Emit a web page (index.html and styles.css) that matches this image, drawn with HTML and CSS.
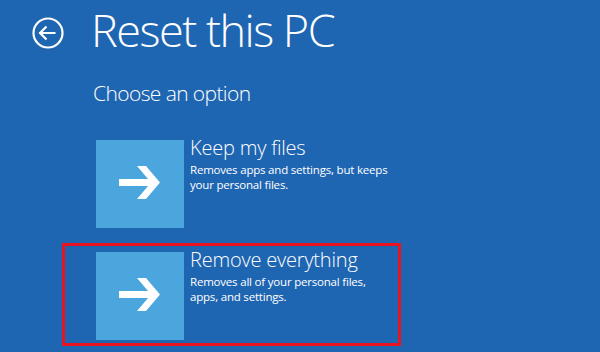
FILE: index.html
```html
<!DOCTYPE html>
<html lang="en">
<head>
    <meta charset="UTF-8">
    <meta name="viewport" content="width=device-width, initial-scale=1.0">
    <title>Reset this PC</title>
    <link rel="stylesheet" href="styles.css">
</head>
<body>
    <div class="screen">
        <div class="header">
            <button class="back-button" aria-label="Back">
                <svg width="34" height="34" viewBox="0 0 34 34">
                    <circle cx="17" cy="17" r="14.5" fill="none" stroke="#fff" stroke-width="2.2"/>
                    <path d="M9.5 17 H24.5 M15.5 10.5 L9 17 L15.5 23.5" fill="none" stroke="#fff" stroke-width="2.2"/>
                </svg>
            </button>
            <h1 class="title">Reset this PC</h1>
        </div>

        <h2 class="subtitle">Choose an option</h2>

        <div class="options">
            <div class="option">
                <div class="option-tile">
                    <svg width="88" height="88" viewBox="0 0 88 88">
                        <rect x="23" y="39" width="33" height="7" fill="#fff"/>
                        <polygon points="41,26 50,26 64,42.5 50,59 41,59 55,42.5" fill="#fff"/>
                    </svg>
                </div>
                <div class="option-text">
                    <div class="option-title">Keep my files</div>
                    <div class="option-desc">Removes apps and settings, but keeps<br>your personal files.</div>
                </div>
            </div>

            <div class="option selected">
                <div class="option-tile">
                    <svg width="88" height="88" viewBox="0 0 88 88">
                        <rect x="23" y="39" width="33" height="7" fill="#fff"/>
                        <polygon points="41,26 50,26 64,42.5 50,59 41,59 55,42.5" fill="#fff"/>
                    </svg>
                </div>
                <div class="option-text">
                    <div class="option-title">Remove everything</div>
                    <div class="option-desc">Removes all of your personal files,<br>apps, and settings.</div>
                </div>
            </div>
        </div>
    </div>
</body>
</html>
```

FILE: styles.css
```css
body {
    margin: 0;
    background-color: #1f66b2;
    font-family: "Open Sans", "Noto Sans", sans-serif;
    color: #fff;
    overflow: hidden;
}

.screen {
    width: 600px;
    height: 352px;
    box-sizing: border-box;
    padding-top: 7px;
}

.header {
    display: flex;
    align-items: flex-start;
}

.back-button {
    width: 34px;
    height: 34px;
    padding: 0;
    margin: 9px 0 0 31px;
    border: none;
    background: none;
    display: block;
}

.back-button svg {
    display: block;
}

.title {
    margin: 0 0 0 26px;
    font-size: 45px;
    font-weight: 300;
    line-height: 45px;
    letter-spacing: -1.5px;
}

.subtitle {
    margin: 31px 0 0 93px;
    font-size: 21px;
    font-weight: 300;
    line-height: 21px;
    letter-spacing: -0.6px;
}

.options {
    margin: 36px 0 0 96px;
    display: flex;
    flex-direction: column;
    gap: 24px;
}

.option {
    position: relative;
    display: flex;
    gap: 6px;
}

.option.selected::after {
    content: "";
    position: absolute;
    left: -34px;
    top: -9px;
    width: 333px;
    height: 97px;
    border: 3px solid #e8141f;
}

.option-tile {
    width: 88px;
    height: 88px;
    background-color: #4ba6dd;
    flex-shrink: 0;
}

.option-tile svg {
    display: block;
}

.option-text {
    margin-top: -2px;
}

.option-title {
    font-size: 20px;
    font-weight: 300;
    line-height: 20px;
    letter-spacing: -0.2px;
}

.option-desc {
    margin-top: 4px;
    font-size: 11.5px;
    line-height: 15px;
    letter-spacing: -0.2px;
}
```
